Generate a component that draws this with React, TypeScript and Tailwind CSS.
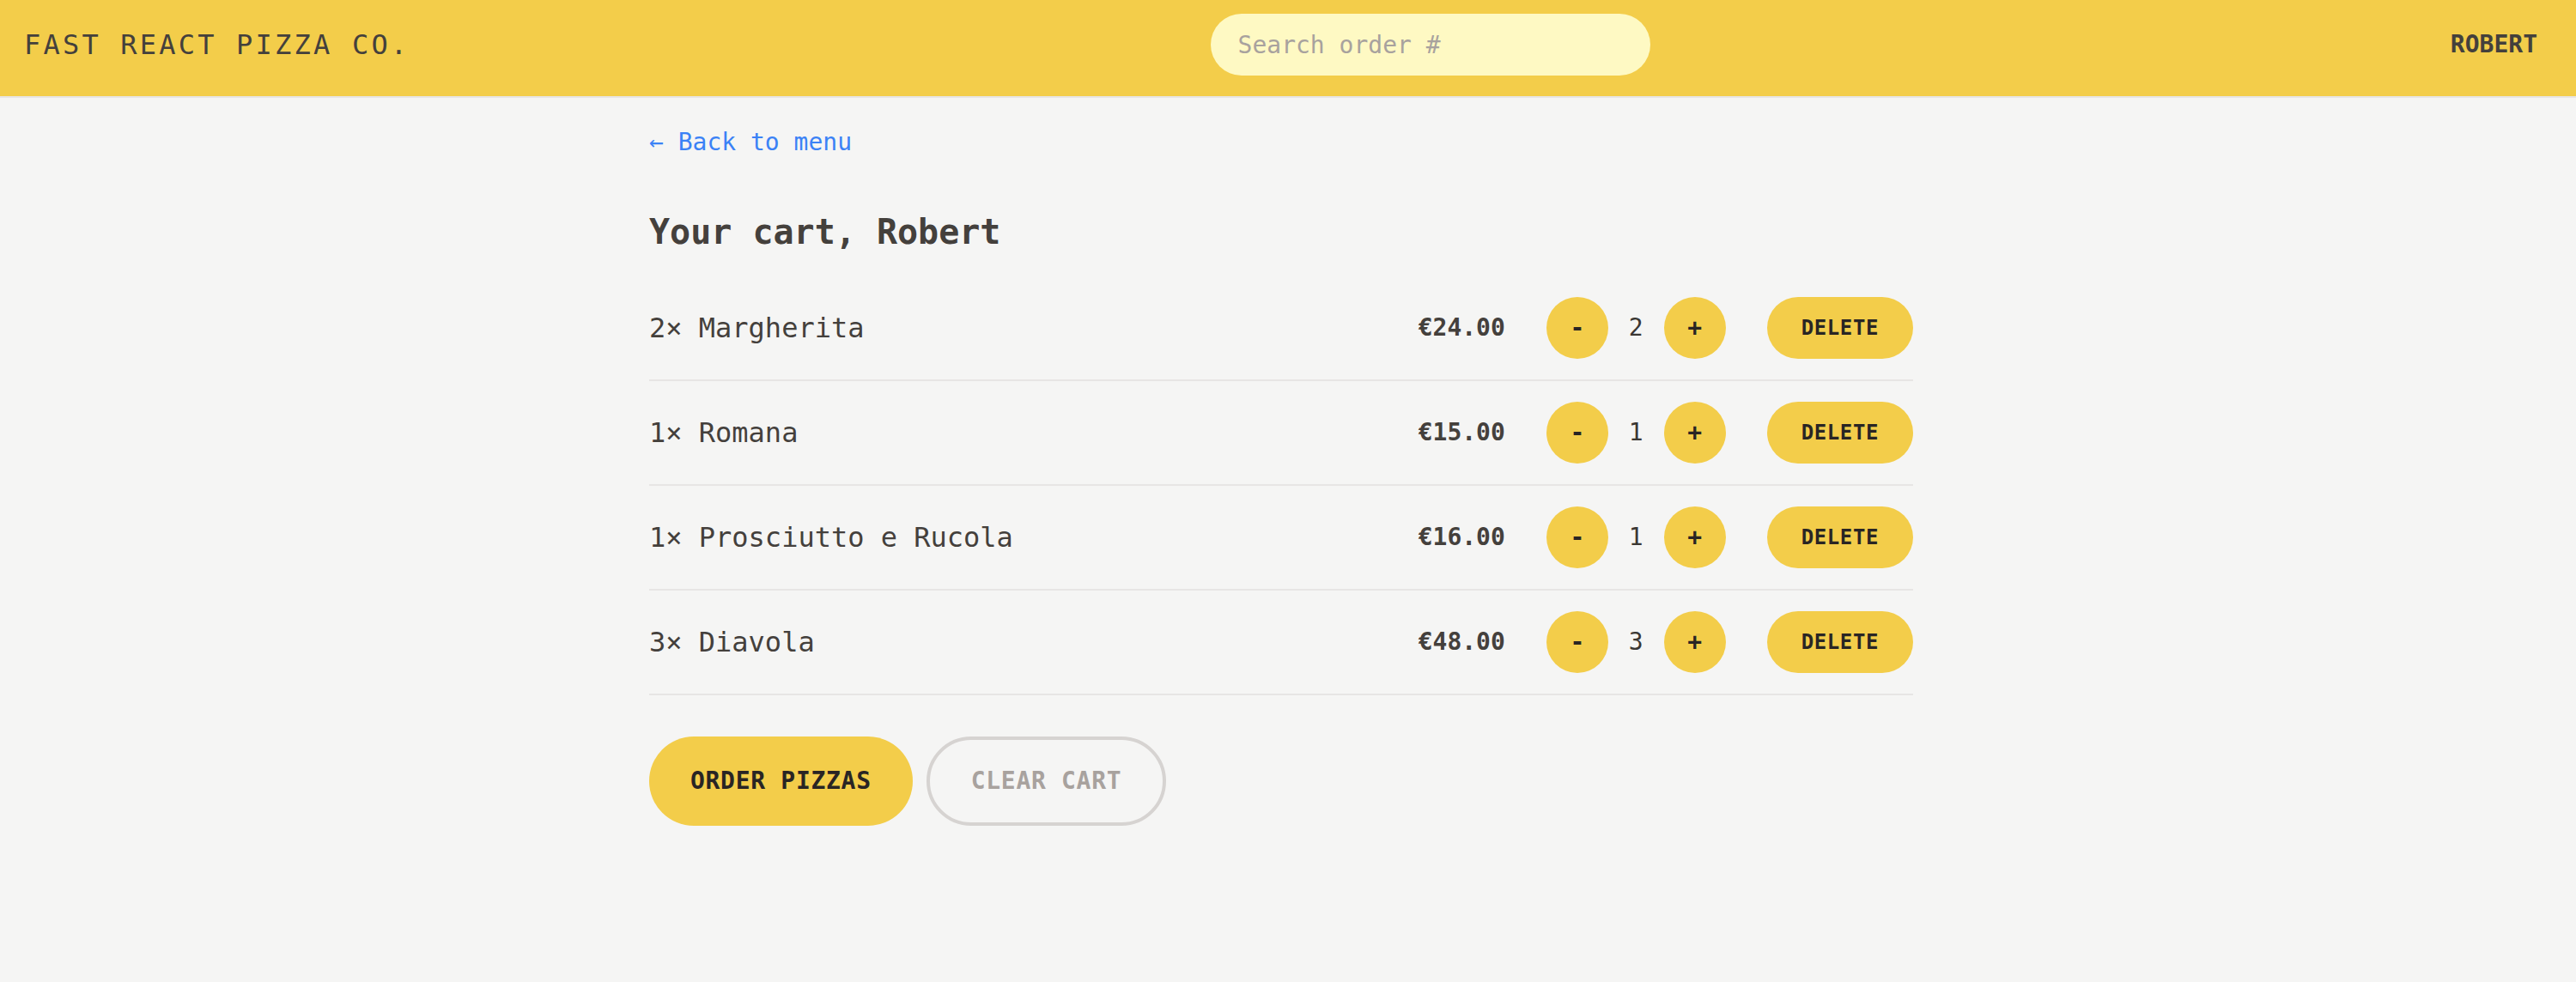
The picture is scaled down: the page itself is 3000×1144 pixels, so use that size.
import { useState } from 'react';

type CartItem = { id: number; name: string; quantity: number; unitPrice: number };

const INITIAL_CART: CartItem[] = [
  { id: 1, name: 'Margherita',            quantity: 2, unitPrice: 12 },
  { id: 2, name: 'Romana',                quantity: 1, unitPrice: 15 },
  { id: 3, name: 'Prosciutto e Rucola',   quantity: 1, unitPrice: 16 },
  { id: 4, name: 'Diavola',               quantity: 3, unitPrice: 16 },
];

const formatCurrency = (n: number) => `€${n.toFixed(2)}`;

function RoundButton({ label, onClick }: { label: string; onClick: () => void }) {
  return (
    <button
      type="button"
      onClick={onClick}
      className="flex h-[72px] w-[72px] items-center justify-center rounded-full bg-[#f3cd4a] text-[28px] font-semibold leading-[40px] text-[#292524]"
    >
      {label}
    </button>
  );
}

function CartRow({
  item,
  onChange,
  onDelete,
}: {
  item: CartItem;
  onChange: (delta: number) => void;
  onDelete: () => void;
}) {
  return (
    <li className="flex items-center justify-between py-[24px]">
      <p className="text-[32px] leading-[48px]">
        {item.quantity}&times; {item.name}
      </p>
      <div className="flex items-center gap-[48px]">
        <p className="text-[28px] font-bold leading-[40px]">{formatCurrency(item.quantity * item.unitPrice)}</p>
        <div className="flex items-center gap-[24px]">
          <RoundButton label="-" onClick={() => onChange(-1)} />
          <span className="text-[28px] leading-[40px] text-[#3a3733]">{item.quantity}</span>
          <RoundButton label="+" onClick={() => onChange(1)} />
        </div>
        <button
          type="button"
          onClick={onDelete}
          className="h-[72px] rounded-full bg-[#f3cd4a] px-[40px] text-[24px] font-semibold uppercase leading-[32px] tracking-[0.6px] text-[#292524]"
        >
          Delete
        </button>
      </div>
    </li>
  );
}

export default function App() {
  const [cart, setCart] = useState(INITIAL_CART);

  const change = (id: number, delta: number) =>
    setCart((c) =>
      c
        .map((it) => (it.id === id ? { ...it, quantity: it.quantity + delta } : it))
        .filter((it) => it.quantity > 0),
    );

  return (
    <div className="min-h-[1144px] bg-[#f5f5f4] font-['DejaVu_Sans_Mono',monospace] text-[#44403c]">
      <header className="flex items-center justify-between border-b-2 border-[#e7e5e4] bg-[#f3cd4a] pb-[24px] pl-[28px] pr-[45px] pt-[16px]">
        <a href="#" className="text-[32px] uppercase leading-[48px] tracking-[3.2px]">
          Fast React Pizza Co.
        </a>
        <input
          placeholder="Search order #"
          className="h-[72px] w-[512px] rounded-full bg-[#fef9c3] px-[32px] text-[28px] outline-none placeholder:text-[#a8a29e]"
        />
        <div className="text-[28px] font-semibold uppercase leading-[40px]">Robert</div>
      </header>

      <main className="mx-auto w-[1536px] pl-[24px] pr-[40px] pt-[32px]">
        <a href="#" className="block text-[28px] leading-[40px] text-[#3b82f6]">
          &larr; Back to menu
        </a>

        <h2 className="mt-[56px] text-[40px] font-bold leading-[56px]">Your cart, Robert</h2>

        <ul className="mt-[24px] divide-y-2 divide-[#e7e5e4] border-b-2 border-[#e7e5e4]">
          {cart.map((item) => (
            <CartRow
              key={item.id}
              item={item}
              onChange={(d) => change(item.id, d)}
              onDelete={() => setCart((c) => c.filter((it) => it.id !== item.id))}
            />
          ))}
        </ul>

        <div className="mt-[48px] flex gap-[16px]">
          <button
            type="button"
            className="h-[104px] rounded-full bg-[#f3cd4a] px-[48px] text-[28px] font-semibold uppercase leading-[40px] tracking-[0.7px] text-[#292524]"
          >
            Order pizzas
          </button>
          <button
            type="button"
            onClick={() => setCart([])}
            className="h-[104px] rounded-full border-4 border-[#d6d3d1] px-[48px] text-[28px] font-semibold uppercase leading-[40px] tracking-[0.7px] text-[#a8a29e]"
          >
            Clear cart
          </button>
        </div>
      </main>
    </div>
  );
}
